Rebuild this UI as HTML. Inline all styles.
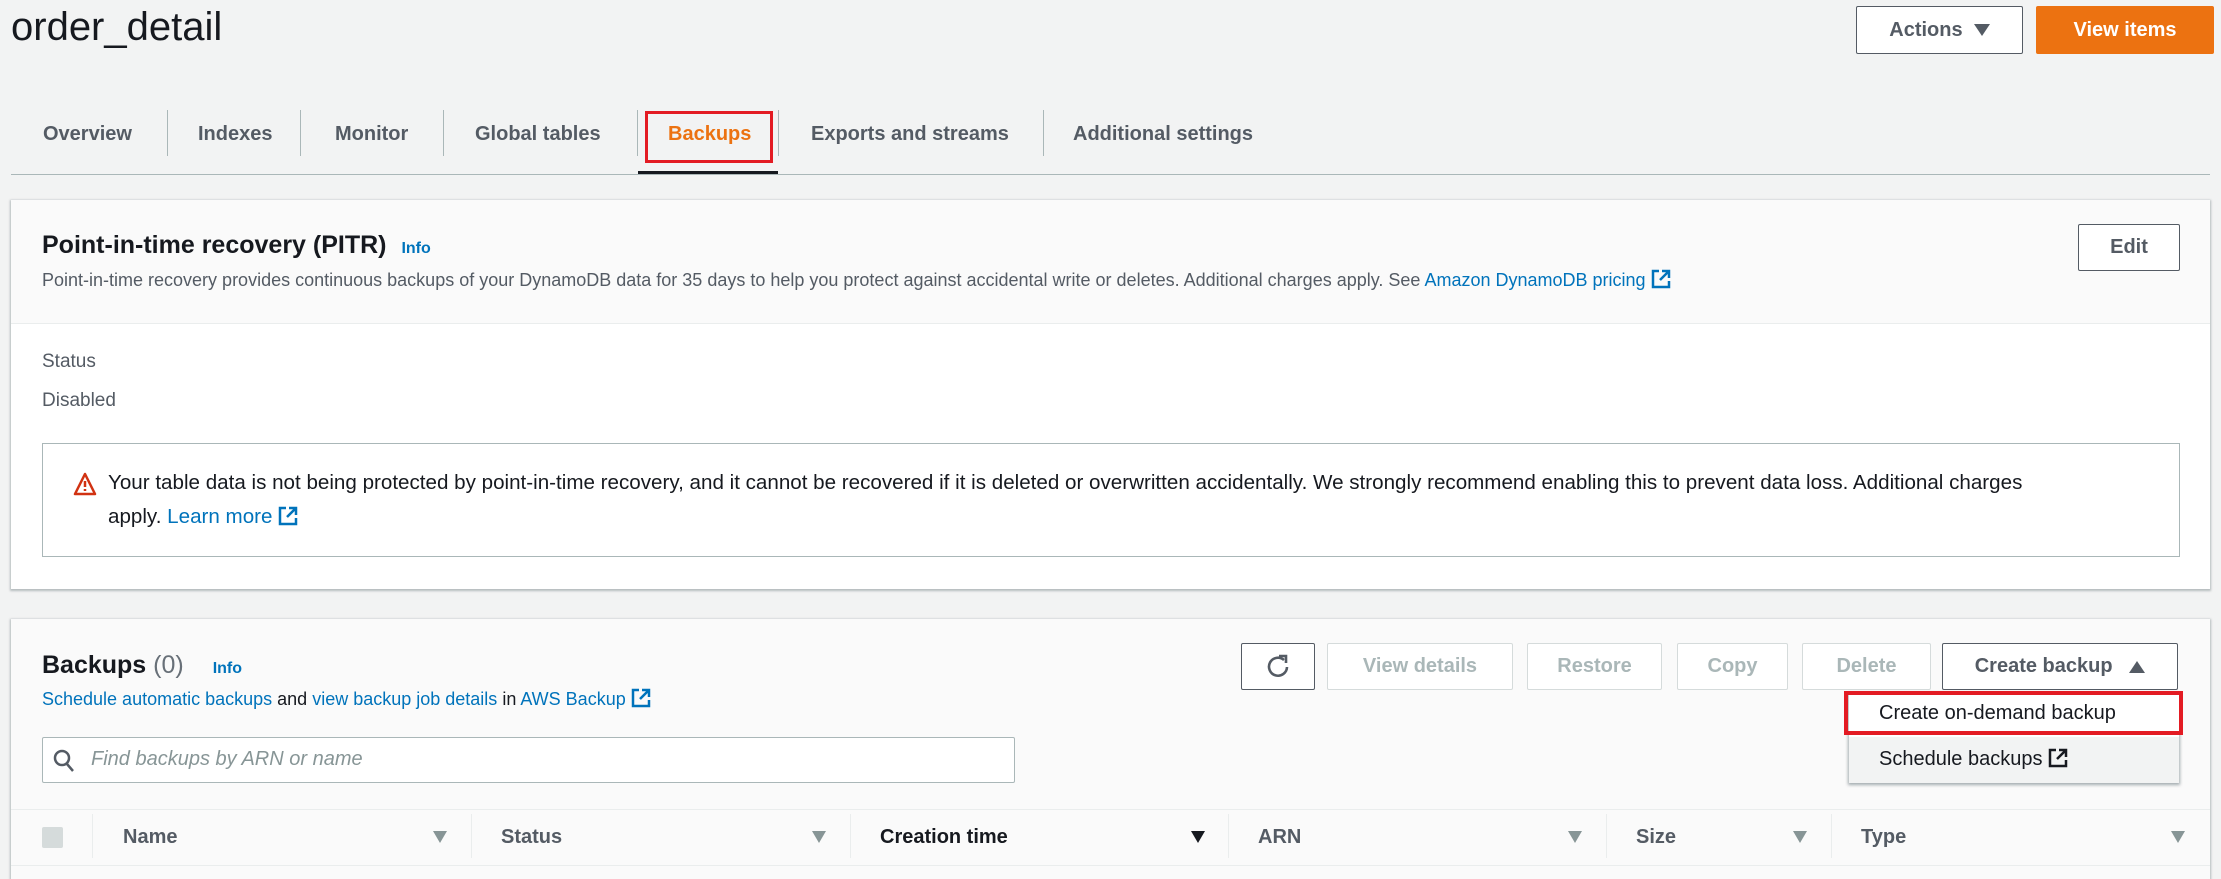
<!DOCTYPE html>
<html><head><meta charset="utf-8"><style>
*{box-sizing:border-box;margin:0;padding:0}
body{width:2221px;height:872px;overflow:hidden;background:#f2f3f3;font-family:"Liberation Sans",sans-serif;color:#16191f;position:relative}
.a{position:absolute;white-space:nowrap}
.btn{position:absolute;border:1.5px solid #545b64;background:#fff;border-radius:2px;font-weight:bold;font-size:20px;display:flex;align-items:center;justify-content:center;color:#545b64}
.dis{border:1.5px solid #d5dbdb;color:#aab7b8}
.tab{position:absolute;top:123px;font-size:20px;font-weight:bold;color:#545b64}
.div{position:absolute;top:110px;height:46px;width:1px;background:#aab7b8}
.panel{position:absolute;left:11px;width:2199px;background:#fafafa;box-shadow:0 1px 2px 1px rgba(0,28,36,.25)}
.link{color:#0073bb}
.th{position:absolute;top:826px;font-size:20px;font-weight:bold;color:#545b64}
.cd{position:absolute;top:814px;width:1px;height:44px;background:#eaeded}
.tri{position:absolute;top:831px;width:0;height:0;border-left:7px solid transparent;border-right:7px solid transparent;border-top:12px solid #879596}
</style></head><body>
<div class="a" style="left:11px;top:5px;font-size:40px;color:#16191f">order_detail</div>
<div class="btn" style="left:1856px;top:6px;width:167px;height:48px">Actions&nbsp;&nbsp;<svg width="16" height="12"><path d="M0 0h16L8 12z" fill="#545b64"/></svg></div>
<div class="btn" style="left:2036px;top:6px;width:178px;height:48px;background:#ec7211;border-color:#ec7211;color:#fff">View items</div>

<div class="tab" style="left:43px">Overview</div><div class="div" style="left:167px"></div>
<div class="tab" style="left:198px">Indexes</div><div class="div" style="left:300px"></div>
<div class="tab" style="left:335px">Monitor</div><div class="div" style="left:443px"></div>
<div class="tab" style="left:475px">Global tables</div><div class="div" style="left:637px"></div>
<div class="tab" style="left:668px;color:#ec7211">Backups</div><div class="div" style="left:778px"></div>
<div class="tab" style="left:811px">Exports and streams</div><div class="div" style="left:1043px"></div>
<div class="tab" style="left:1073px">Additional settings</div>
<div class="a" style="left:645px;top:111px;width:128px;height:52px;border:3px solid #e31b23"></div>
<div class="a" style="left:638px;top:171px;width:140px;height:4px;background:#16191f"></div>
<div class="a" style="left:11px;top:174px;width:2199px;height:1px;background:#aab7b8"></div>

<div class="panel" style="top:200px;height:389px;background:#fff">
 <div class="a" style="left:0;top:0;width:2199px;height:124px;background:#fafafa;border-bottom:1px solid #eaeded"></div>
 <div class="a" style="left:31px;top:31px;font-size:25px;font-weight:bold">Point-in-time recovery (PITR) <span class="link" style="font-size:16px;margin-left:8px">Info</span></div>
 <div class="a" style="left:31px;top:69px;font-size:18px;color:#545b64">Point-in-time recovery provides continuous backups of your DynamoDB data for 35 days to help you protect against accidental write or deletes. Additional charges apply. See <span class="link">Amazon DynamoDB pricing</span> <svg width="20" height="20" viewBox="0 0 20 20" style="vertical-align:-3px"><path d="M8 2H2v16h16v-6M11 2h7v7M18 2 9 11" fill="none" stroke="#0073bb" stroke-width="2.5"/></svg></div>
 <div class="btn" style="left:2067px;top:24px;width:102px;height:47px">Edit</div>
 <div class="a" style="left:31px;top:151px;font-size:19px;color:#545b64">Status</div>
 <div class="a" style="left:31px;top:190px;font-size:19px;color:#545b64">Disabled</div>
 <div class="a" style="left:31px;top:243px;width:2138px;height:114px;border:1px solid #aab7b8;background:#fff"></div>
 <svg class="a" style="left:62px;top:272px" width="24" height="24" viewBox="0 0 24 24"><path d="M12 2 2 22h20z" fill="none" stroke="#d13212" stroke-width="2.5" stroke-linejoin="round"/><path d="M12 9v6M12 17v2" stroke="#d13212" stroke-width="2.5"/></svg>
 <div class="a" style="left:97px;top:266px;font-size:20.6px;line-height:34px">Your table data is not being protected by point-in-time recovery, and it cannot be recovered if it is deleted or overwritten accidentally. We strongly recommend enabling this to prevent data loss. Additional charges<br>apply. <span class="link">Learn more</span> <svg width="20" height="20" viewBox="0 0 20 20" style="vertical-align:-3px"><path d="M8 2H2v16h16v-6M11 2h7v7M18 2 9 11" fill="none" stroke="#0073bb" stroke-width="2.5"/></svg></div>
</div>

<div class="panel" style="top:619px;height:260px">
 <div class="a" style="left:31px;top:32px;font-size:25px;font-weight:bold">Backups <span style="font-weight:normal;color:#687078">(0)</span> <span class="link" style="font-size:16px;margin-left:22px">Info</span></div>
 <div class="a" style="left:31px;top:69px;font-size:18px;color:#16191f"><span class="link">Schedule automatic backups</span> and <span class="link">view backup job details</span> in <span class="link">AWS Backup</span> <svg width="20" height="20" viewBox="0 0 20 20" style="vertical-align:-3px"><path d="M8 2H2v16h16v-6M11 2h7v7M18 2 9 11" fill="none" stroke="#0073bb" stroke-width="2.5"/></svg></div>
 <div class="a" style="left:31px;top:118px;width:973px;height:46px;background:#fff;border:1px solid #aab7b8;border-radius:2px"></div>
 <svg class="a" style="left:42px;top:130px" width="22" height="24" viewBox="0 0 22 24"><circle cx="9" cy="9" r="7" fill="none" stroke="#545b64" stroke-width="2.5"/><path d="M14 15l6 7" stroke="#545b64" stroke-width="2.5"/></svg>
 <div class="a" style="left:80px;top:129px;font-size:20px;font-style:italic;color:#879596">Find backups by ARN or name</div>
 <div class="a" style="left:0;top:190px;width:2199px;height:1px;background:#eaeded"></div>
 <div class="a" style="left:0;top:246px;width:2199px;height:1px;background:#eaeded"></div>
</div>
<div class="a" style="left:42px;top:827px;width:21px;height:21px;background:#d5dbdb;border-radius:2px"></div>
<div class="cd" style="left:92px"></div><div class="th" style="left:123px">Name</div><div class="tri" style="left:433px"></div>
<div class="cd" style="left:471px"></div><div class="th" style="left:501px">Status</div><div class="tri" style="left:812px"></div>
<div class="cd" style="left:850px"></div><div class="th" style="left:880px;color:#16191f">Creation time</div><div class="tri" style="left:1191px;border-top-color:#16191f"></div>
<div class="cd" style="left:1228px"></div><div class="th" style="left:1258px">ARN</div><div class="tri" style="left:1568px"></div>
<div class="cd" style="left:1606px"></div><div class="th" style="left:1636px">Size</div><div class="tri" style="left:1793px"></div>
<div class="cd" style="left:1831px"></div><div class="th" style="left:1861px">Type</div><div class="tri" style="left:2171px"></div>

<div class="btn" style="left:1241px;top:643px;width:74px;height:47px;color:#545b64"><svg width="26" height="28" viewBox="0 0 26 28"><path d="M19 7A9 9 0 1 0 22 14" fill="none" stroke="#545b64" stroke-width="2.6"/><path d="M14 3h7v7" fill="none" stroke="#545b64" stroke-width="2.6"/></svg></div>
<div class="btn dis" style="left:1327px;top:643px;width:186px;height:47px">View details</div>
<div class="btn dis" style="left:1527px;top:643px;width:135px;height:47px">Restore</div>
<div class="btn dis" style="left:1677px;top:643px;width:111px;height:47px">Copy</div>
<div class="btn dis" style="left:1802px;top:643px;width:129px;height:47px">Delete</div>
<div class="btn" style="left:1942px;top:643px;width:236px;height:47px">Create backup&nbsp;&nbsp;&nbsp;<svg width="16" height="12"><path d="M0 12h16L8 0z" fill="#545b64"/></svg></div>

<div class="a" style="left:1849px;top:693px;width:330px;height:90px;background:#fff;box-shadow:0 1px 3px 1px rgba(0,28,36,.35)"></div>
<div class="a" style="left:1849px;top:737px;width:330px;height:46px;background:#f2f3f3"></div>
<div class="a" style="left:1844px;top:691px;width:339px;height:44px;border:4px solid #e31b23"></div>
<div class="a" style="left:1879px;top:702px;font-size:20px">Create on-demand backup</div>
<div class="a" style="left:1879px;top:748px;font-size:20px">Schedule backups <svg width="20" height="20" viewBox="0 0 20 20" style="vertical-align:-3px"><path d="M8 2H2v16h16v-6M11 2h7v7M18 2 9 11" fill="none" stroke="#16191f" stroke-width="2.5"/></svg></div>
</body></html>
